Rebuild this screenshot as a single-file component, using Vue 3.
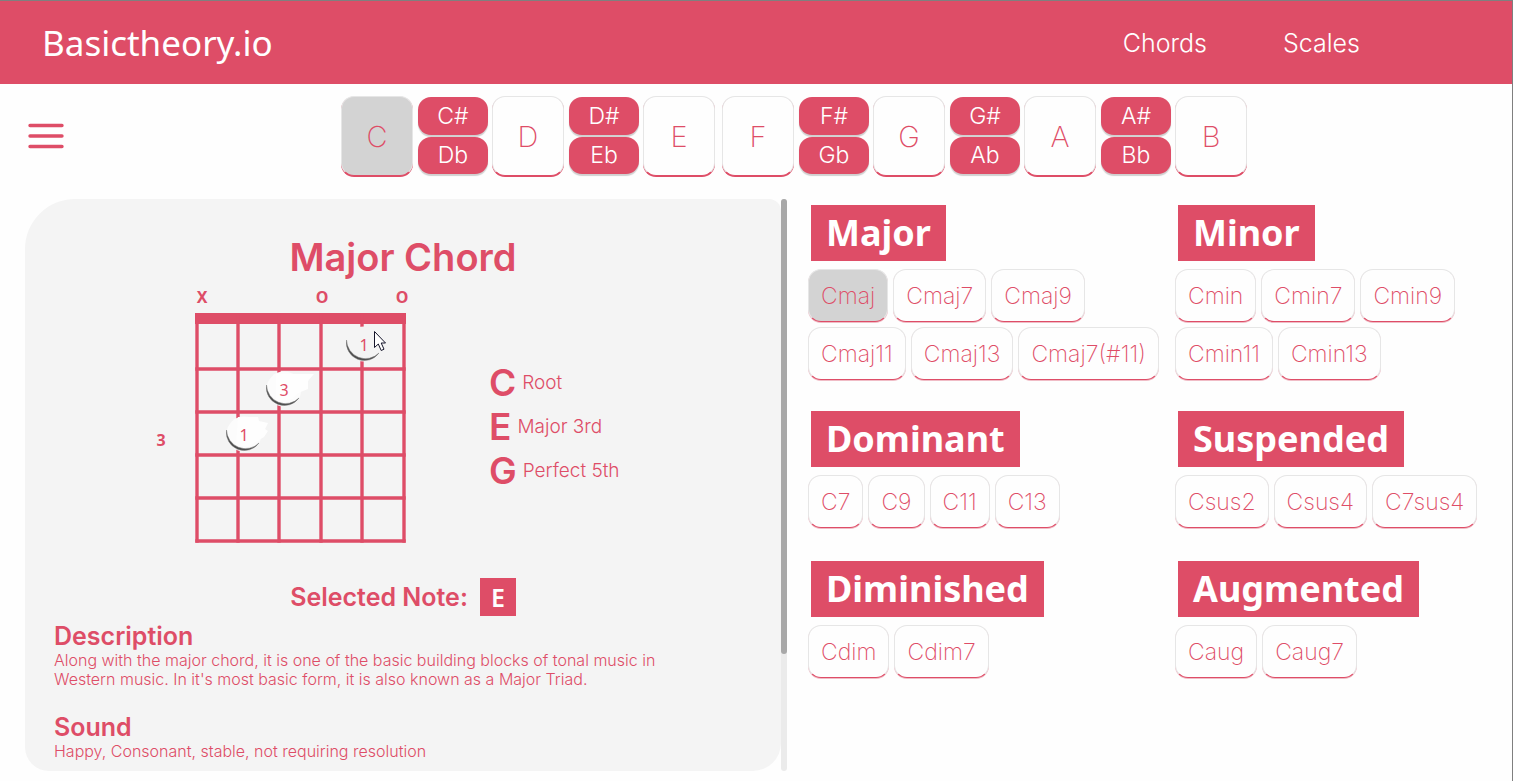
<script setup>
import { ref } from 'vue'

const keys = [
  ['C'], ['C#', 'Db'], ['D'], ['D#', 'Eb'], ['E'], ['F'],
  ['F#', 'Gb'], ['G'], ['G#', 'Ab'], ['A'], ['A#', 'Bb'], ['B'],
]
const root = ref('C')
const chord = ref('Cmaj')
const groups = [
  { name: 'Major', chords: ['Cmaj', 'Cmaj7', 'Cmaj9', 'Cmaj11', 'Cmaj13', 'Cmaj7(#11)'] },
  { name: 'Minor', chords: ['Cmin', 'Cmin7', 'Cmin9', 'Cmin11', 'Cmin13'] },
  { name: 'Dominant', chords: ['C7', 'C9', 'C11', 'C13'] },
  { name: 'Suspended', chords: ['Csus2', 'Csus4', 'C7sus4'] },
  { name: 'Diminished', chords: ['Cdim', 'Cdim7'] },
  { name: 'Augmented', chords: ['Caug', 'Caug7'] },
]
const tones = [['C', 'Root'], ['E', 'Major 3rd'], ['G', 'Perfect 5th']]
const strings = [47, 88, 129, 171, 212, 254]
const frets = [84, 127, 170, 213, 256]
const fingers = [
  { x: 214, y: 59, label: '1' },
  { x: 134, y: 104, label: '3', smear: 'M126 89 L164 89 L158 96 L158 104 L148 108 L143 114 L126 116Z' },
  { x: 94, y: 149, label: '1', smear: 'M88 132 L108 132 L109 136 L118 138 L115 144 L118 146 L114 152 L104 158 L98 162 L86 160Z' },
]
</script>

<template>
  <div class="page">
    <header class="header">
      <a class="brand" href="#">Basictheory.io</a>
      <nav class="nav">
        <a href="#chords">Chords</a>
        <a href="#scales">Scales</a>
      </nav>
    </header>

    <div class="toolbar">
      <button class="menu" aria-label="Menu">
        <svg width="36" height="26" viewBox="0 0 36 26">
          <path d="M2 2.5H34M2 13H34M2 23.5H34" stroke="#de4d67" stroke-width="3.4" stroke-linecap="round" />
        </svg>
      </button>
      <div class="keys">
        <div v-for="k in keys" :key="k[0]" :class="['key', { split: k.length > 1, wide: k[0] === 'F' }]">
          <button v-for="n in k" :key="n" :class="{ active: root === n }" @click="root = n">{{ n }}</button>
        </div>
      </div>
    </div>

    <main class="main">
      <div class="viewer">
        <section class="panel">
          <h1>Major Chord</h1>
          <div class="diagram-row">
            <svg class="diagram" width="260" height="260" viewBox="0 0 260 260">
              <g class="mark">
                <text x="52" y="18">X</text>
                <text x="172" y="18">O</text>
                <text x="252" y="18">O</text>
                <text x="11" y="161">3</text>
              </g>
              <rect x="45" y="28" width="211" height="11" fill="#de4d67" />
              <g stroke="#de4d67" stroke-width="3.4">
                <line v-for="x in strings" :key="x" :x1="x" :x2="x" y1="30" y2="257.700" />
                <line v-for="y in frets" :key="y" x1="45.300" x2="255.700" :y1="y" :y2="y" />
              </g>
              <g v-for="f in fingers" :key="f.x">
                <circle :cx="f.x" :cy="f.y" r="17.500" :fill="f.smear ? '#fcfcfc' : '#f4f4f4'" />
                <path v-if="f.smear" :d="f.smear" fill="#fefefe" />
                <path
                  :d="`M${f.x - 17.5} ${f.y - 4} A18 18 0 0 0 ${f.x + 15} ${f.y + 9} A19 19 0 0 1 ${f.x - 17.5} ${f.y - 4}Z`"
                  fill="#4d4d4d" stroke="#7c7c7c" stroke-width="0.500"
                />
                <text class="finger" :x="f.x" :y="f.y + 7">{{ f.label }}</text>
              </g>
              <path class="cursor" d="M224.500 46.500V62.500L228.300 59L231.200 65.500L234 64.200L231.200 58H235.500Z" />
            </svg>
            <ul class="tones">
              <li v-for="t in tones" :key="t[0]"><b>{{ t[0] }}</b><span>{{ t[1] }}</span></li>
            </ul>
          </div>
          <p class="selected">Selected Note: <strong>E</strong></p>
          <h2>Description</h2>
          <p class="copy">Along with the major chord, it is one of the basic building blocks of tonal music in Western music. In it's most basic form, it is also known as a Major Triad.</p>
          <h2>Sound</h2>
          <p class="copy">Happy, Consonant, stable, not requiring resolution</p>
        </section>
        <div class="track"><div class="thumb"></div></div>
      </div>

      <div class="groups">
        <section v-for="g in groups" :key="g.name" class="group">
          <h3>{{ g.name }}</h3>
          <div class="chips">
            <button v-for="c in g.chords" :key="c" :class="{ active: chord === c }" @click="chord = c">{{ c }}</button>
          </div>
        </section>
      </div>
    </main>
  </div>
</template>

<style>
body { background: #fefefe; }
</style>

<style scoped>
.page {
  box-sizing: border-box;
  min-height: 100vh;
  border-top: 1px solid #7f7f7f;
  border-right: 1px solid #7f7f7f;
  color: #de4d67;
  font-family: Inter, "Liberation Sans", sans-serif;
}
button { font-family: inherit; padding: 0; cursor: pointer; box-sizing: border-box; }
h1, h2, h3, p, ul { margin: 0; padding: 0; }
.header {
  box-sizing: border-box;
  height: 83px;
  padding: 0 152px 0 42px;
  display: flex;
  align-items: center;
  justify-content: space-between;
  background: #de4d67;
}
.header a { color: #fff; text-decoration: none; }
.brand { font-family: "Noto Sans", sans-serif; font-size: 35px; }
.nav { display: flex; gap: 76px; font-size: 25px; font-weight: 300; }
.toolbar { height: 114px; display: flex; align-items: flex-start; }
.menu { border: 0; background: none; margin: 39px 12px 0 28px; height: 26px; }
.menu svg { display: block; }
.keys { flex: 1; display: flex; justify-content: center; gap: 4px; padding-top: 12px; }
.key { width: 72px; height: 80px; display: flex; flex-direction: column; }
.key button {
  flex: 1;
  border: 1px solid #e6e6e6;
  border-bottom-color: #de4d67;
  border-radius: 13px;
  box-shadow: 0 1px 0 #de4d67;
  background: #fefefe;
  color: #de4d67;
  font-size: 29px;
  font-weight: 200;
}
.key.wide { margin-left: 3px; }
.key.split { width: 70px; margin-left: 1px; gap: 2px; padding: 1px 0 2px; box-sizing: border-box; }
.key.split button {
  border: 0;
  background: #de4d67;
  color: #fff;
  font-size: 23px;
  font-weight: 300;
  box-shadow: 0 2px 1px #d0d0d0;
}
.key button.active, .chips button.active { background: #d3d3d3; }
.main { display: grid; grid-template-columns: 762px 1fr; padding-left: 25px; align-items: start; }
.viewer { display: flex; padding-top: 1px; }
.panel {
  flex: 1;
  box-sizing: border-box;
  height: 572px;
  padding: 36px 29px 0;
  border-radius: 50px 12px 28px 24px;
  background: #f4f4f4;
}
h1 { text-align: center; font-size: 38px; line-height: 44px; font-weight: 600; }
.diagram-row { display: flex; align-items: flex-start; gap: 79px; padding: 6px 0 0 96px; }
.diagram { display: block; flex: none; }
.mark text { font: 700 16px "Noto Sans", sans-serif; fill: #de4d67; text-anchor: middle; }
.finger { font: 400 16px "Noto Sans", sans-serif; fill: #de4d67; text-anchor: middle; }
.cursor { fill: #fff; stroke: #15152a; stroke-width: 1; }
.tones { list-style: none; padding-top: 75px; }
.tones li { display: flex; align-items: center; gap: 6px; height: 44px; font-size: 19px; font-weight: 300; }
.tones b { font-size: 37px; font-weight: 600; }
.selected {
  display: flex;
  justify-content: center;
  align-items: center;
  gap: 12px;
  margin-top: 33px;
  font-size: 25px;
  font-weight: 600;
}
.selected strong {
  width: 36px;
  line-height: 38px;
  text-align: center;
  background: #de4d67;
  color: #fff;
  font-family: "Noto Sans", sans-serif;
  font-weight: 600;
}
h2 { margin-top: 6px; font-size: 25px; line-height: 29px; font-weight: 600; }
.copy { padding-right: 40px; font-size: 16px; line-height: 19px; font-weight: 300; }
.copy + h2 { margin-top: 24px; }
.track { width: 6px; flex: none; background: #ebebeb; border-radius: 3px; }
.thumb { height: 455px; background: #a8a8a8; border-radius: 3px; }
.groups { display: grid; grid-template-columns: 367px 1fr; padding: 7px 0 0 21px; }
.group { margin-bottom: 31px; }
.group:nth-child(n + 3) { margin-bottom: 33px; }
h3 {
  width: max-content;
  margin: 0 0 8px 3px;
  padding: 0 15px;
  background: #de4d67;
  color: #fff;
  font: 700 36px/56px "Noto Sans", sans-serif;
}
.chips { display: flex; flex-wrap: wrap; gap: 5px; }
.chips button {
  height: 53px;
  padding: 0 12px;
  border: 1px solid #e6e6e6;
  border-bottom-color: #de4d67;
  border-radius: 13px;
  box-shadow: 0 1px 0 #f0bcc6;
  background: #fefefe;
  color: #de4d67;
  font-size: 23px;
  font-weight: 200;
}
</style>
